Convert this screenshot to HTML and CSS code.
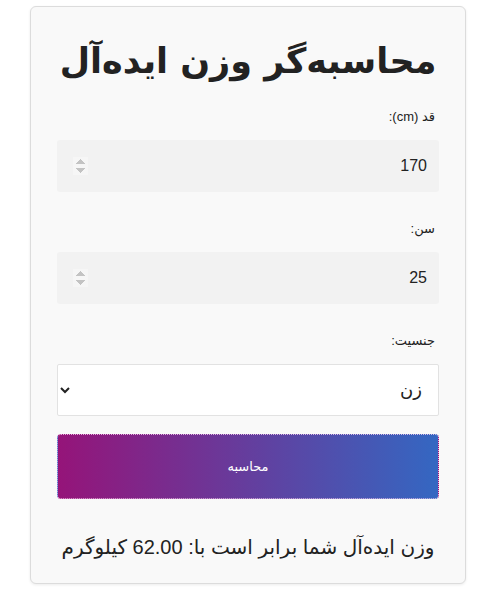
FILE: index.html
```html
<!DOCTYPE html>
<html lang="fa" dir="rtl">
<head>
  <meta charset="UTF-8">
  <title>محاسبه‌گر وزن ایده‌آل</title>
  <link rel="stylesheet" href="styles.css">
</head>
<body>
  <div class="card">
    <h1>محاسبه‌گر وزن ایده‌آل</h1>

    <form id="weight-form">
      <label for="height">قد (cm):</label>
      <input type="number" id="height" value="170">

      <label for="age">سن:</label>
      <input type="number" id="age" value="25">

      <label for="gender">جنسیت:</label>
      <select id="gender">
        <option value="female">زن</option>
        <option value="male">مرد</option>
      </select>

      <button type="submit">محاسبه</button>
    </form>

    <p id="result">وزن ایده‌آل شما برابر است با: 62.00 کیلوگرم</p>
  </div>
</body>
</html>
```

FILE: styles.css
```css
body {
  margin: 0;
  padding: 6px 15px 6px 30px;
  background: #fff;
  font-family: "Liberation Sans", "DejaVu Sans", sans-serif;
  color: #222;
}
.card {
  background: #f9f9f9;
  border: 1px solid #dcdcdc;
  border-radius: 6px;
  padding: 16px 26px 24px;
  box-shadow: 0 1px 3px rgba(0,0,0,0.08);
}
h1 {
  font-family: "DejaVu Sans", sans-serif;
  font-size: 35px;
  text-align: center;
  margin: 18px 0 27px;
  color: #222;
}
label {
  display: block;
  font-size: 13px;
  line-height: 18px;
  margin: 0 4px 14px;
  color: #222;
}
input[type="number"],
select {
  display: block;
  width: 100%;
  box-sizing: border-box;
  height: 52px;
  padding: 0 12px;
  font-family: "Liberation Sans", "DejaVu Sans", sans-serif;
  font-size: 16px;
  color: #222;
  margin-bottom: 28px;
}
input[type="number"] {
  border: none;
  background: #f2f2f2;
  border-radius: 3px;
}
input[type="number"]::-webkit-inner-spin-button {
  opacity: 0.45;
  margin-left: 4px;
}
select {
  background: #fff;
  border: 1px solid #e2e2e2;
  border-radius: 2px;
  margin-bottom: 18px;
  font-size: 18px;
}
button {
  display: block;
  width: 100%;
  height: 65px;
  border: 1px dotted rgba(255,210,240,0.8);
  border-radius: 4px;
  background: linear-gradient(to right, #951479, #3467c2);
  color: #fff;
  font-family: "DejaVu Sans", sans-serif;
  font-size: 13px;
  cursor: pointer;
}
#result {
  text-align: center;
  font-size: 20px;
  margin: 36px 0 0;
  color: #222;
}
```
